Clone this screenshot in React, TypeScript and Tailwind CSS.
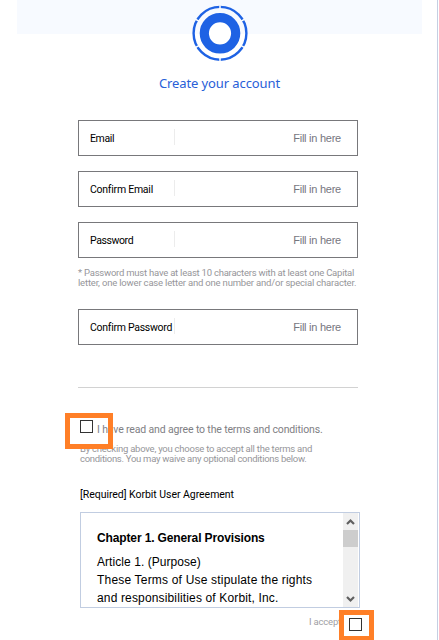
interface Field {
  label: string;
  spacing: string;
}

function KorbitLogo() {
  return (
    <svg className="block" width="56" height="56" viewBox="-28 -28.3 56 56">
      <circle r="11" fill="#fff" />
      <circle r="15.7" fill="none" stroke="#1e62e4" strokeWidth="9.2" />
      <circle r="26.4" fill="none" stroke="#1e62e4" strokeWidth="2.4" />
      {[30, 90, 150, 210, 270, 330].map((angle) => (
        <line key={angle} x1="24" x2="28" y1="0" y2="0" stroke="#fbfdff" strokeWidth="1.5" transform={`rotate(${angle})`} />
      ))}
    </svg>
  );
}

function FormField({ label, spacing }: Field) {
  return (
    <label className="flex h-[36px] w-[280px] items-center border border-[#78787b] pl-[11px] pr-[16px]">
      <span className={`w-[84px] whitespace-nowrap pt-px text-[10.5px] text-black ${spacing}`}>{label}</span>
      <span className="mb-[2px] h-[16px] w-px bg-[#ececec]" />
      <span className="ml-auto font-['Liberation_Sans'] text-[11px] tracking-[-0.25px] text-[#76767e]">Fill in here</span>
    </label>
  );
}

function Checkbox() {
  return <span className="block size-[13px] border border-[#333] bg-white" />;
}

function Agreement() {
  return (
    <div className="ml-[2px] flex h-[96px] w-[280px] border border-[#c1cde1] pr-px">
      <div className="flex-1 overflow-hidden whitespace-nowrap pl-[16px] pt-[16px] font-['Liberation_Sans'] text-[12px] leading-[18px] text-black">
        <h3 className="mb-[6px] font-bold tracking-[-0.13px]">Chapter 1. General Provisions</h3>
        <p className="tracking-[0.06px]">Article 1. (Purpose)</p>
        <p className="tracking-[0.19px]">These Terms of Use stipulate the rights</p>
        <p className="tracking-[0.15px]">and responsibilities of Korbit, Inc.</p>
      </div>
      <div className="flex w-[15px] flex-col items-center bg-[#f0f0f0]">
        <svg className="h-[17px] w-[15px]" viewBox="0 0 15 17">
          <path d="M4 11 7.5 7.5 11 11" fill="none" stroke="#606060" strokeWidth="2.2" />
        </svg>
        <div className="h-[17px] w-full bg-[#cdcdcd]" />
        <svg className="mt-auto h-[17px] w-[15px]" viewBox="0 0 15 17">
          <path d="M4 7 7.5 10.5 11 7" fill="none" stroke="#606060" strokeWidth="2.2" />
        </svg>
      </div>
    </div>
  );
}

export default function App() {
  return (
    <main className="relative h-[640px] w-[439px] overflow-hidden bg-white font-['Roboto',sans-serif]">
      <div className="mr-px h-[640px] border-r border-[#c5cfe3] pl-[17px]">
        <header className="flex h-[34px] w-[405px] justify-center bg-[#f7faff] pt-[5px]">
          <KorbitLogo />
        </header>
        <div className="ml-[61px] w-[280px]">
          <h1 className="mt-[39px] h-[20px] whitespace-nowrap pl-[3px] text-center font-['Noto_Sans',sans-serif] text-[13px] leading-[20px] tracking-[-0.1px] text-[#2860d8]">Create your account</h1>
          <div className="mt-[27px] flex flex-col gap-[15px]">
            <FormField label="Email" spacing="tracking-[-0.35px]" />
            <FormField label="Confirm Email" spacing="tracking-[-0.25px]" />
            <FormField label="Password" spacing="tracking-[-0.4px]" />
          </div>
          <div className="mt-[10px] whitespace-nowrap text-[9.5px] leading-[10px] text-[#96969a]">
            <p className="tracking-[-0.23px]">* Password must have at least 10 characters with at least one Capital</p>
            <p className="tracking-[-0.19px]">letter, one lower case letter and one number and/or special character.</p>
          </div>
          <div className="mt-[21px]">
            <FormField label="Confirm Password" spacing="tracking-[-0.28px]" />
          </div>
          <div className="mt-[42px] h-px bg-[#d2d2d2]" />
          <div className="mt-[32px] flex h-[18px] pl-[2px]">
            <Checkbox />
            <span className="ml-[4px] whitespace-nowrap pt-px text-[10.5px] leading-[18px] tracking-[-0.15px] text-[#808084]">I have read and agree to the terms and conditions.</span>
          </div>
          <div className="mt-[6px] whitespace-nowrap pl-[2px] text-[9.5px] leading-[10px] text-[#96969a]">
            <p className="tracking-[-0.24px]">By checking above, you choose to accept all the terms and</p>
            <p className="tracking-[-0.28px]">conditions. You may waive any optional conditions below.</p>
          </div>
          <h2 className="mb-[10px] mt-[23px] h-[15px] whitespace-nowrap pl-[2px] text-[10.5px] leading-[15px] tracking-[-0.04px] text-black">[Required] Korbit User Agreement</h2>
          <Agreement />
          <div className="mt-[6px] flex h-[16px] items-center">
            <span className="ml-[231px] whitespace-nowrap text-[9.5px] tracking-[-0.2px] text-[#a0a0a4]">I accept</span>
          </div>
        </div>
      </div>
      {/* highlights around the two checkboxes */}
      <div className="absolute left-[65px] top-[413px] h-[36px] w-[48px] border-[5px] border-[#ff7f27]" />
      <div className="absolute left-[339px] top-[610px] h-[31px] w-[35px] border-[5px] border-[#ff7f27] bg-white pl-[5px] pt-[3px]">
        <Checkbox />
      </div>
    </main>
  );
}
